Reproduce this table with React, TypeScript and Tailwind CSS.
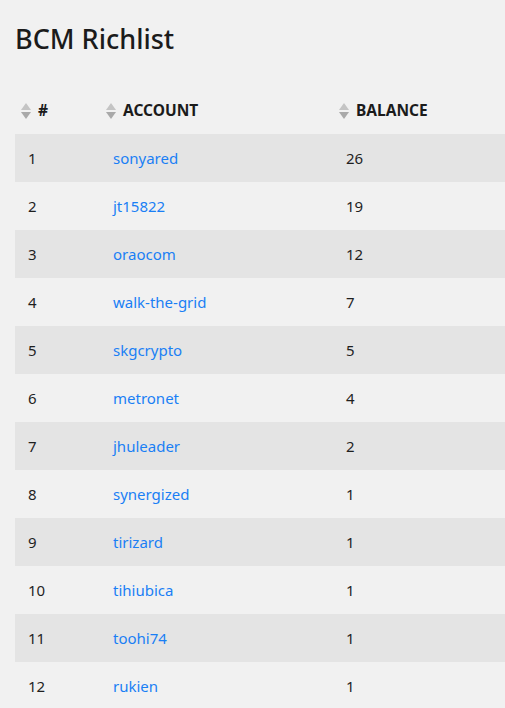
import React from "react";

type Row = { rank: number; account: string; balance: number };

const rows: Row[] = [
  { rank: 1, account: "sonyared", balance: 26 },
  { rank: 2, account: "jt15822", balance: 19 },
  { rank: 3, account: "oraocom", balance: 12 },
  { rank: 4, account: "walk-the-grid", balance: 7 },
  { rank: 5, account: "skgcrypto", balance: 5 },
  { rank: 6, account: "metronet", balance: 4 },
  { rank: 7, account: "jhuleader", balance: 2 },
  { rank: 8, account: "synergized", balance: 1 },
  { rank: 9, account: "tirizard", balance: 1 },
  { rank: 10, account: "tihiubica", balance: 1 },
  { rank: 11, account: "toohi74", balance: 1 },
  { rank: 12, account: "rukien", balance: 1 },
];

const SortIcon: React.FC = () => (
  <svg width="10" height="16" viewBox="0 0 10 16" className="shrink-0">
    <path d="M5 0 L10 7 L0 7 Z" fill="#c4c4c4" />
    <path d="M0 9 L10 9 L5 16 Z" fill="#a9a9a9" />
  </svg>
);

const HeadCell: React.FC<{ label: string }> = ({ label }) => (
  <div className="flex items-center gap-[7px] pl-[6px]">
    <SortIcon />
    <span className="font-bold uppercase text-[15.5px] text-[#1b1b1b]">{label}</span>
  </div>
);

export default function App() {
  return (
    <div
      className="min-h-[708px] bg-[#f1f1f1] pl-[15px] text-[#1f1f1f]"
      style={{ fontFamily: '"Segoe UI", "Noto Sans", sans-serif' }}
    >
      <h1 className="pt-[20px] text-[27px] font-medium leading-[38px] text-[#1b1b1b]">
        BCM Richlist
      </h1>
      <div className="mt-[28px]">
        <div className="grid h-[48px] grid-cols-[85px_233px_1fr] items-center pt-[2px]">
          <HeadCell label="#" />
          <HeadCell label="Account" />
          <HeadCell label="Balance" />
        </div>
        {rows.map((r, i) => (
          <div
            key={r.rank}
            className={
              "grid h-[48px] grid-cols-[85px_233px_1fr] items-center text-[15px] " +
              (i % 2 === 0 ? "bg-[#e4e4e4]" : "bg-[#f1f1f1]")
            }
          >
            <div className="pl-[13px]">{r.rank}</div>
            <div className="pl-[13px]">
              <a href="#" className="text-[#1a7ff5]">
                {r.account}
              </a>
            </div>
            <div className="pl-[13px]">{r.balance}</div>
          </div>
        ))}
      </div>
    </div>
  );
}
